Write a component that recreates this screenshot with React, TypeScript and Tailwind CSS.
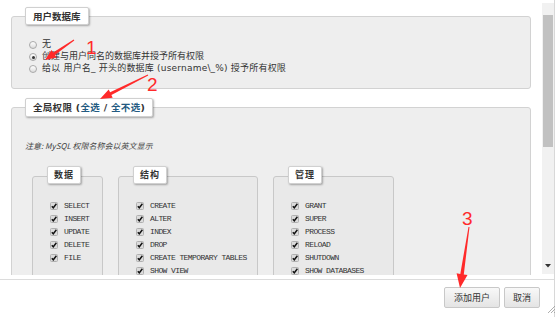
import React from "react";

const red = "#ff2a2a";

function arrowPoints(
  x1: number, y1: number, x2: number, y2: number,
  headLen: number, headW: number, neckW: number, tailW: number
) {
  const dx = x2 - x1, dy = y2 - y1;
  const L = Math.hypot(dx, dy);
  const ux = dx / L, uy = dy / L;
  const nx = -uy, ny = ux;
  const bx = x2 - ux * headLen, by = y2 - uy * headLen;
  const pts = [
    [x1 + nx * tailW / 2, y1 + ny * tailW / 2],
    [bx + nx * neckW / 2, by + ny * neckW / 2],
    [bx + nx * headW / 2, by + ny * headW / 2],
    [x2, y2],
    [bx - nx * headW / 2, by - ny * headW / 2],
    [bx - nx * neckW / 2, by - ny * neckW / 2],
    [x1 - nx * tailW / 2, y1 - ny * tailW / 2],
  ];
  return pts.map((p) => p.map((v) => v.toFixed(1)).join(",")).join(" ");
}

function Radio({ checked }: { checked?: boolean }) {
  return (
    <span className="w-[8px] h-[8px] rounded-full border border-[#a9a9a9] bg-gradient-to-b from-[#ffffff] to-[#dcdcdc] flex items-center justify-center shrink-0">
      {checked && <span className="w-[3px] h-[3px] rounded-full bg-[#333]" />}
    </span>
  );
}

function Check() {
  return (
    <svg width="8" height="8" viewBox="0 0 8 8" className="shrink-0">
      <rect x="0.5" y="0.5" width="7" height="7" rx="1" fill="#dcdcdc" stroke="#b0b0b0" />
      <path d="M1.8 4.2 L3.3 5.8 L6.4 1.8" fill="none" stroke="#111" strokeWidth="1.4" />
    </svg>
  );
}

function PrivBox({ title, items, w }: { title: string; items: string[]; w: string }) {
  return (
    <div className={`${w} h-[140px] shrink-0 border border-[#c8c8c8] rounded-[3px] bg-[#e9e9e9]`}>
      <div className="flex -mt-[11px]">
        <span className="w-[14px] shrink-0" />
        <div className="h-[18px] px-[6px] bg-white border border-[#d0d0d0] rounded-[2px] shadow-[1px_1px_2px_rgba(0,0,0,0.3)] text-[9px] leading-[16px] font-bold text-[#333] tracking-[1px]">
          {title}
        </div>
      </div>
      <div className="mt-[15px] flex flex-col">
        {items.map((it) => (
          <div key={it} className="h-[13px] flex items-center pl-[17px] gap-[6px]">
            <Check />
            <span className="font-['Liberation_Mono',monospace] text-[8px] tracking-[-0.6px] text-[#333] whitespace-nowrap">
              {it}
            </span>
          </div>
        ))}
      </div>
    </div>
  );
}

export default function App() {
  return (
    <div className="relative w-[558px] h-[317px] bg-white overflow-hidden font-['Noto_Sans_CJK_SC','Noto_Sans',sans-serif] text-[#333]">
      <div className="w-[555px] h-[317px] border-r border-[#d8d8d8] flex flex-col">
        <div className="flex h-[279px]">
          <div className="w-[542px] h-[275px] overflow-hidden pt-[16px] pl-[11px]">
            {/* Fieldset 1 */}
            <div className="w-[520px] h-[73px] border border-[#d2d2d2] rounded-[3px] bg-[#eeeeee]">
              <div className="flex -mt-[10px]">
                <span className="w-[13px] shrink-0" />
                <div className="h-[18px] px-[7px] bg-white border border-[#d0d0d0] rounded-[2px] shadow-[1px_1px_2px_rgba(0,0,0,0.3)] text-[9.5px] leading-[16px] font-bold text-[#333] whitespace-nowrap">
                  用户数据库
                </div>
              </div>
              <div className="mt-[14px] flex flex-col text-[9px] font-['DejaVu_Sans','Noto_Sans_CJK_SC',sans-serif]">
                <div className="h-[12px] flex items-center pl-[17px] gap-[5px]">
                  <Radio />
                  <span>无</span>
                </div>
                <div className="h-[12px] flex items-center pl-[17px] gap-[5px]">
                  <Radio checked />
                  <span>创建与用户同名的数据库并授予所有权限</span>
                </div>
                <div className="h-[12px] flex items-center pl-[17px] gap-[5px]">
                  <Radio />
                  <span className="whitespace-nowrap tracking-[0.2px]">给以 用户名_ 开头的数据库 (username\_%) 授予所有权限</span>
                </div>
              </div>
            </div>
            {/* Fieldset 2 */}
            <div className="mt-[18px] w-[520px] h-[320px] border border-[#d2d2d2] rounded-[3px] bg-[#eeeeee]">
              <div className="flex -mt-[10px]">
                <span className="w-[13px] shrink-0" />
                <div className="h-[19px] px-[7px] bg-white border border-[#d0d0d0] rounded-[2px] shadow-[1px_1px_2px_rgba(0,0,0,0.3)] text-[9.5px] leading-[17px] font-bold text-[#333] whitespace-nowrap font-['DejaVu_Sans','Noto_Sans_CJK_SC',sans-serif] tracking-[0.3px]">
                  全局权限 (<span className="text-[#235a81]">全选</span> / <span className="text-[#235a81]">全不选</span>)
                </div>
              </div>
              <div className="pl-[13px] mt-[23px] h-[12px] leading-[12px] text-[8px] italic text-[#444] whitespace-nowrap">
                注意: MySQL 权限名称会以英文显示
              </div>
              <div className="mt-[24px] pl-[20px] flex gap-[15px]">
                <PrivBox w="w-[71px]" title="数据" items={["SELECT", "INSERT", "UPDATE", "DELETE", "FILE"]} />
                <PrivBox
                  w="w-[140px]"
                  title="结构"
                  items={["CREATE", "ALTER", "INDEX", "DROP", "CREATE TEMPORARY TABLES", "SHOW VIEW", "CREATE ROUTINE"]}
                />
                <PrivBox
                  w="w-[121px]"
                  title="管理"
                  items={["GRANT", "SUPER", "PROCESS", "RELOAD", "SHUTDOWN", "SHOW DATABASES", "LOCK TABLES"]}
                />
              </div>
            </div>
          </div>
          {/* Scrollbar */}
          <div className="w-[12px] mt-[3px] h-[271px] bg-[#f1f1f1] flex flex-col">
            <div className="mt-[12px] mx-[1px] h-[132px] bg-[#c1c1c1]" />
            <div className="flex-1" />
            <div className="h-[10px] flex items-start justify-center">
              <svg width="6" height="4" viewBox="0 0 6 4">
                <path d="M0 0 L6 0 L3 3.5 Z" fill="#333" />
              </svg>
            </div>
          </div>
        </div>
        {/* Footer */}
        <div className="flex-1 border-t border-[#dcdcdc] flex justify-end items-start gap-[4px] pt-[7px] pr-[14px]">
          <button className="w-[56px] h-[21px] rounded-[2px] border border-[#c8c8c8] bg-gradient-to-b from-[#f8f8f8] to-[#e4e4e4] text-[9px] text-[#333]">
            添加用户
          </button>
          <button className="w-[36px] h-[21px] rounded-[2px] border border-[#c8c8c8] bg-gradient-to-b from-[#f8f8f8] to-[#e4e4e4] text-[9px] text-[#333]">
            取消
          </button>
        </div>
      </div>
      {/* Resize grip */}
      <svg className="absolute left-[546px] top-[304px]" width="10" height="10" viewBox="0 0 10 10">
        <path d="M9 2 L2 9 M9 5 L5 9 M9 8 L8 9" stroke="#999" strokeWidth="0.8" />
      </svg>
      {/* Annotations */}
      <svg className="absolute left-0 top-0 pointer-events-none" width="558" height="317" viewBox="0 0 558 317">
        <polygon points={arrowPoints(74, 40, 45, 60, 11, 9, 3, 1)} fill={red} />
        <polygon points={arrowPoints(148, 75, 100, 99, 12, 9, 3, 1)} fill={red} />
        <polygon points={arrowPoints(469, 227, 460, 288, 14, 11, 3.5, 1)} fill={red} />
        <text x="86" y="54" fontSize="19" fill={red} fontFamily="'Liberation Sans', Arial, sans-serif">1</text>
        <text x="147" y="91" fontSize="19" fill={red} fontFamily="'Liberation Sans', Arial, sans-serif">2</text>
        <text x="462" y="225" fontSize="19" fill={red} fontFamily="'Liberation Sans', Arial, sans-serif">3</text>
      </svg>
    </div>
  );
}
